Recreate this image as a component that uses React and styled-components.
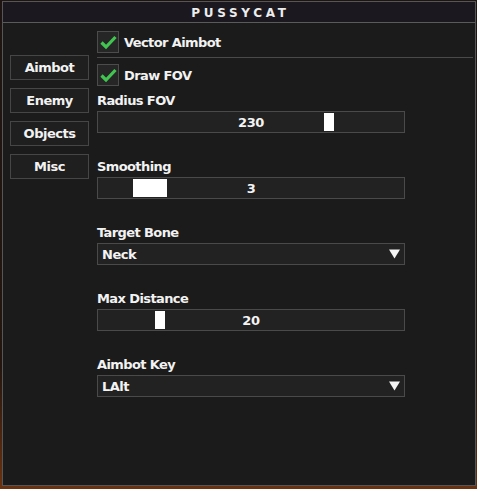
import React from "react";
import styled, { createGlobalStyle } from "styled-components";

const GlobalStyle = createGlobalStyle`
  html, body {
    margin: 0;
    padding: 0;
  }
  body {
    background: linear-gradient(180deg, #1e1512 0%, #24160f 75%, #6a3210 100%);
    font-family: "DejaVu Sans", Verdana, sans-serif;
    width: 477px;
    height: 489px;
    overflow: hidden;
  }
`;

const Page = styled.div`
  padding: 1px 0 0 2px;
`;

const Window = styled.div`
  width: 474px;
  height: 485px;
  box-sizing: border-box;
  border: 1px solid #565656;
  background: #1b1b1b;
  display: flex;
  flex-direction: column;
`;

const TitleBar = styled.div`
  height: 21px;
  box-sizing: border-box;
  border-bottom: 1px solid #5a5a5a;
  background: #1b191f;
  display: flex;
  align-items: center;
  justify-content: center;
  color: #ececec;
  font-weight: bold;
  font-size: 12px;
  letter-spacing: 3.7px;
  padding: 1px 0 0 3px;
`;

const Body = styled.div`
  display: flex;
  padding: 8px 2px 0 7px;
  gap: 8px;
`;

const Sidebar = styled.div`
  width: 79px;
  padding-top: 24px;
  display: flex;
  flex-direction: column;
  gap: 8px;
`;

const Tab = styled.div`
  height: 25px;
  box-sizing: border-box;
  border: 1px solid #464646;
  background: #1f1f1f;
  color: #f2f2f2;
  font-weight: bold;
  font-size: 13px;
  letter-spacing: -0.5px;
  display: flex;
  align-items: center;
  justify-content: center;
`;

const Content = styled.div`
  flex: 1;
  display: flex;
  flex-direction: column;
`;

const CheckRow = styled.div`
  display: flex;
  align-items: center;
  gap: 5px;
  height: 22px;
  color: #f2f2f2;
  font-weight: bold;
  font-size: 13px;
  letter-spacing: -0.6px;
`;

const Box = styled.div`
  width: 22px;
  height: 22px;
  box-sizing: border-box;
  border: 1px solid #4c4c4c;
  background: #262626;
  display: flex;
  align-items: center;
  justify-content: center;
`;

const Divider = styled.div`
  height: 1px;
  background: #4a4a4a;
  margin: 4px 0 6px;
`;

const Field = styled.div`
  display: flex;
  flex-direction: column;
  margin-top: ${(p) => (p.$first ? "7px" : "26px")};
  width: 308px;
`;

const Label = styled.div`
  height: 16px;
  line-height: 16px;
  margin-bottom: 2px;
  color: #f2f2f2;
  font-weight: bold;
  font-size: 13px;
  letter-spacing: -0.6px;
`;

const Track = styled.div`
  position: relative;
  height: 22px;
  box-sizing: border-box;
  border: 1px solid #4a4a4a;
  background: #222222;
  display: flex;
  align-items: center;
  justify-content: center;
  color: #f4f4f4;
  font-weight: bold;
  font-size: 13px;
  letter-spacing: -0.4px;
`;

const Handle = styled.div`
  position: absolute;
  top: 1px;
  bottom: 1px;
  background: #ffffff;
`;

const Combo = styled.div`
  height: 22px;
  box-sizing: border-box;
  border: 1px solid #4a4a4a;
  background: #222222;
  display: flex;
  align-items: center;
  justify-content: space-between;
  padding: 0 4px 0 4px;
  color: #f4f4f4;
  font-weight: bold;
  font-size: 13px;
  letter-spacing: -0.5px;
`;

const Check = () => (
  <svg width="17" height="15" viewBox="0 0 17 15">
    <path d="M1.5 7.5 L6 12 L15.5 2" fill="none" stroke="#42c451" strokeWidth="3.2" strokeLinecap="butt" strokeLinejoin="miter" />
  </svg>
);

const Arrow = () => (
  <svg width="11" height="10" viewBox="0 0 11 10">
    <polygon points="0,0.5 11,0.5 5.5,9.5" fill="#f4f4f4" />
  </svg>
);

const Slider = ({ label, value, left, width, first }) => (
  <Field $first={first}>
    <Label>{label}</Label>
    <Track>
      <Handle style={{ left: `${left}px`, width: `${width}px` }} />
      <span>{value}</span>
    </Track>
  </Field>
);

const Select = ({ label, value }) => (
  <Field>
    <Label>{label}</Label>
    <Combo>
      <span>{value}</span>
      <Arrow />
    </Combo>
  </Field>
);

export default function App() {
  return (
    <>
      <GlobalStyle />
      <Page>
        <Window>
          <TitleBar>PUSSYCAT</TitleBar>
          <Body>
            <Sidebar>
              <Tab>Aimbot</Tab>
              <Tab>Enemy</Tab>
              <Tab>Objects</Tab>
              <Tab>Misc</Tab>
            </Sidebar>
            <Content>
              <CheckRow>
                <Box><Check /></Box>
                Vector Aimbot
              </CheckRow>
              <Divider />
              <CheckRow>
                <Box><Check /></Box>
                Draw FOV
              </CheckRow>
              <Slider first label="Radius FOV" value="230" left={226} width={10} />
              <Slider label="Smoothing" value="3" left={35} width={34} />
              <Select label="Target Bone" value="Neck" />
              <Slider label="Max Distance" value="20" left={57} width={10} />
              <Select label="Aimbot Key" value="LAlt" />
            </Content>
          </Body>
        </Window>
      </Page>
    </>
  );
}
